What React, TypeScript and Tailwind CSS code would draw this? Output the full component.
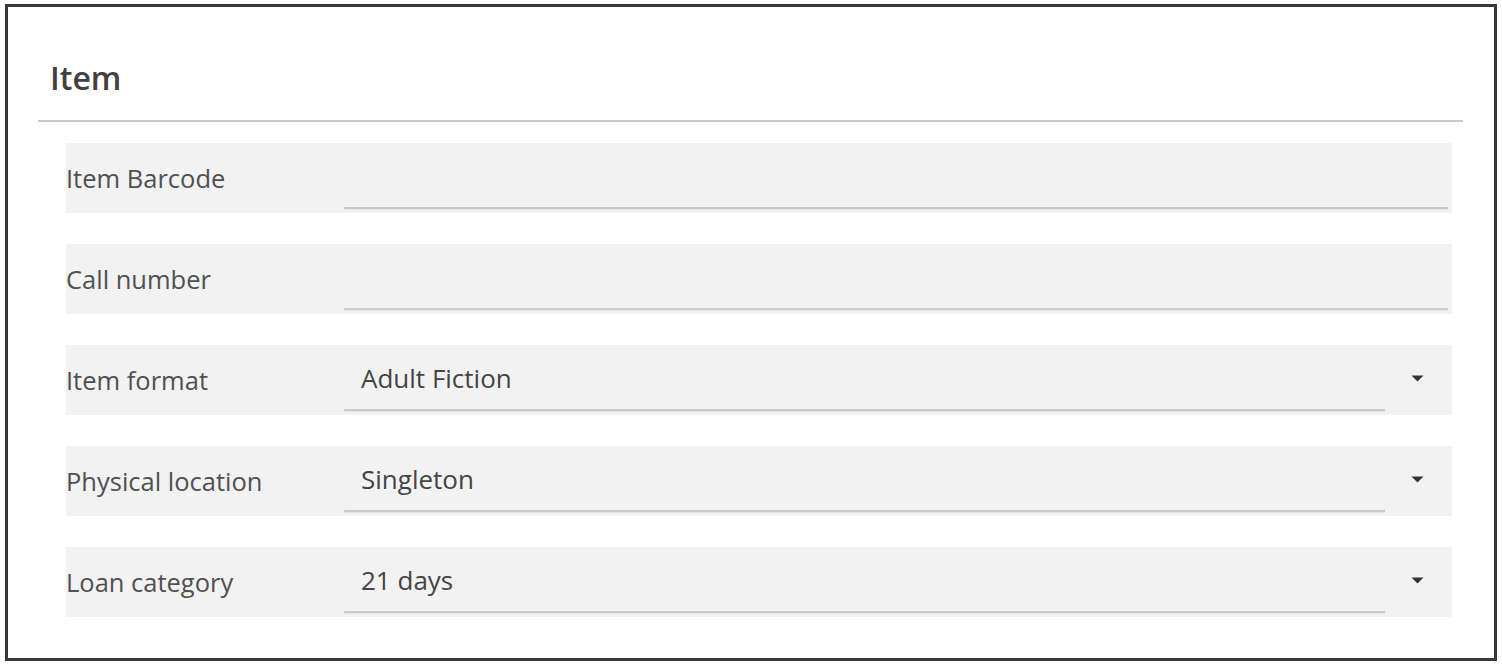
import React from "react";

const font = { fontFamily: '"Open Sans", "Noto Sans", sans-serif' };

function Caret() {
  return (
    <svg width="13" height="7" viewBox="0 0 13 7" className="block">
      <path d="M0.5 0.5 L12.5 0.5 L6.5 6.5 Z" fill="#333" />
    </svg>
  );
}

function Row({ label, value, select }: { label: string; value?: string; select?: boolean }) {
  return (
    <div className="flex h-[70px] items-stretch bg-[#f2f2f2] pr-[4px]">
      <div className="flex w-[278px] shrink-0 items-center text-[25.5px] text-[#505050]">{label}</div>
      <div className="flex flex-1 items-stretch">
        <div className="flex flex-1 flex-col">
          <div className="flex flex-1 items-center pl-[17px] pt-[3px] text-[26px] text-[#444]">{value}</div>
          <div className="mb-[4px] h-[2px] rounded-l-[2px] bg-[#c9c9c9] shadow-[0_1px_1px_rgba(0,0,0,0.06)]" />
        </div>
        {select && (
          <div className="flex w-[63px] items-center justify-center pl-[2px] pb-[3px]">
            <Caret />
          </div>
        )}
      </div>
    </div>
  );
}

export default function App() {
  return (
    <div className="h-[666px] w-[1502px] bg-white pl-[5px] pt-[4px]" style={font}>
      <div className="flex h-[657px] w-[1492px] flex-col border-[3px] border-[#383838]">
        <div className="flex h-[113px] items-center pl-[42px] pt-[28px] text-[32px] font-semibold text-[#404040]">
          Item
        </div>
        <div className="ml-[30px] mr-[31px] h-[2px] bg-[#cccccc]" />
        <div className="ml-[58px] mr-[42px] mt-[21px] flex flex-col gap-[31px]">
          <Row label="Item Barcode" />
          <Row label="Call number" />
          <Row label="Item format" value="Adult Fiction" select />
          <Row label="Physical location" value="Singleton" select />
          <Row label="Loan category" value="21 days" select />
        </div>
      </div>
    </div>
  );
}
